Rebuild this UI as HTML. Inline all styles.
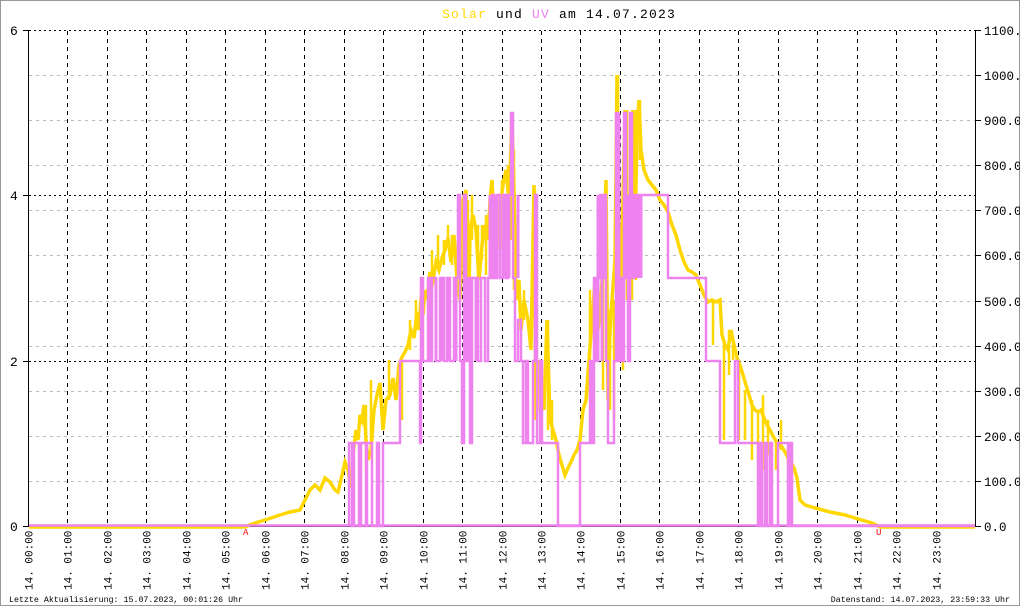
<!DOCTYPE html>
<html><head><meta charset="utf-8"><style>
html,body{margin:0;padding:0;background:#fff}
svg{display:block}
text{font-family:"Liberation Mono","DejaVu Sans Mono",monospace}
</style></head><body>
<svg width="1020" height="606" viewBox="0 0 1020 606" xmlns="http://www.w3.org/2000/svg">
<rect x="0.5" y="0.5" width="1019" height="605" fill="#fff" stroke="#999"/>
<text x="559" y="18" text-anchor="middle" font-size="13" letter-spacing="1.2" fill="#000"><tspan fill="#FFD700">Solar</tspan> und <tspan fill="#EE82EE">UV</tspan> am 14.07.2023</text>
<g stroke="#bbb" stroke-dasharray="3,4" stroke-width="1">
<line x1="29" y1="481.5" x2="975" y2="481.5"/><line x1="29" y1="436.5" x2="975" y2="436.5"/>
<line x1="29" y1="391.5" x2="975" y2="391.5"/><line x1="29" y1="346.5" x2="975" y2="346.5"/>
<line x1="29" y1="301.5" x2="975" y2="301.5"/><line x1="29" y1="255.5" x2="975" y2="255.5"/>
<line x1="29" y1="210.5" x2="975" y2="210.5"/><line x1="29" y1="165.5" x2="975" y2="165.5"/>
<line x1="29" y1="120.5" x2="975" y2="120.5"/><line x1="29" y1="75.5" x2="975" y2="75.5"/>
</g>
<g stroke="#000" stroke-dasharray="2,3" stroke-width="1">
<line x1="29" y1="30.5" x2="975" y2="30.5"/><line x1="29" y1="195.5" x2="975" y2="195.5"/><line x1="29" y1="361.5" x2="975" y2="361.5"/>
</g>
<g stroke="#000" stroke-dasharray="4,4" stroke-width="1" id="vg"></g>
<g id="lbl" font-size="11" fill="#000"></g>
<line x1="28.5" y1="30" x2="28.5" y2="527" stroke="#000"/>
<line x1="975.5" y1="30" x2="975.5" y2="527" stroke="#000"/>
<line x1="28" y1="526.5" x2="976" y2="526.5" stroke="#000"/>
<g stroke="#000"><line x1="23" y1="30.5" x2="28" y2="30.5"/><line x1="23" y1="195.5" x2="28" y2="195.5"/><line x1="23" y1="361.5" x2="28" y2="361.5"/><line x1="23" y1="526.5" x2="28" y2="526.5"/></g>
<g stroke="#000" id="rt"></g>
<g font-size="13" fill="#000"><text x="10" y="35">6</text><text x="10" y="200">4</text><text x="10" y="366">2</text><text x="10" y="531">0</text></g>
<g font-size="12.5" fill="#000" id="rl"></g>
<polyline fill="none" stroke="#FFD700" stroke-width="3.5" stroke-linejoin="miter" points="29,527 245,527 252,524 265,520 280,515 290,512 300,510 305,500 310,490 315,485 320,490 325,478 330,482 335,490 338,492 342,475 345,462 348,470 351,488 353,455 356,430 358,440 360,415 362,420 364,405 366,440 368,460 371,450 374,410 377,395 380,383 383,430 386,400 390,395 393,378 396,400 399,365 402,357 405,352 408,345 411,330 414,338 417,312 419,330 421,298 423,315 425,290 427,300 430,272 433,280 436,262 439,270 442,258 445,250 448,238 451,262 454,235 457,280 460,300 463,200 466,190 468,360 470,230 473,215 476,230 479,280 482,245 485,225 488,240 490,200 492,180 495,250 498,240 500,205 503,185 506,170 509,200 512,120 514,190 516,300 519,280 521,330 524,300 528,320 531,350 534,185 536,420 539,360 541,390 544,410 547,320 550,420 553,430 556,440 559,455 562,465 565,475 568,468 571,462 574,455 577,450 580,440 583,410 586,400 589,360 592,320 595,280 598,330 601,300 604,240 606,180 608,400 610,330 612,300 615,260 617,75 619,230 621,300 623,200 625,110 627,250 629,280 631,140 633,110 635,240 637,130 639,100 641,150 644,170 648,180 652,185 656,190 660,200 664,205 668,212 672,225 676,235 680,250 684,262 688,270 692,272 696,275 700,285 704,295 708,302 712,300 716,302 720,300 722,335 725,345 728,350 731,330 734,345 737,358 740,365 743,375 746,385 749,395 752,405 755,410 758,412 761,410 764,418 767,425 770,430 773,436 776,441 779,445 782,447 785,452 788,458 791,462 794,468 797,478 800,500 805,505 815,508 830,512 845,515 855,518 865,521 872,523 880,527 975,527"/>
<g stroke="#FFD700" stroke-width="2.5" fill="none">
<path d="M366,405V470 M371,445V380 M389,400V360 M402,360V420 M410,350V320 M416,330V300 M421,310V290 M432,290V250 M438,265V235 M444,265V240 M448,245V225 M452,265V235 M458,290V240 M464,200V270 M468,360V200 M472,240V195 M478,290V225 M482,260V225 M486,275V215 M492,260V180 M497,250V195 M502,250V180 M508,265V165 M511,240V120 M514,290V150 M524,320V290 M535,190V330 M540,410V360 M548,320V430 M552,400V440 M590,290V400 M595,350V280 M603,390V230 M606,180V280 M610,410V310 M614,420V300 M618,75V310 M623,370V180 M627,110V300 M632,300V140 M636,280V110 M640,100V160 M713,300V345 M724,340V440 M729,330V375 M733,345V360 M739,360V440 M745,390V440 M752,400V460 M758,410V460 M763,395V470 M768,420V455 M776,440V470 M781,420V450 M788,450V465"/>
</g>
<line x1="29" y1="525.5" x2="975" y2="525.5" stroke="#EE82EE" stroke-width="2.5"/>
<polyline fill="none" stroke="#EE82EE" stroke-width="2.5" points="349,526 349,443 352,443 352,526 354,526 354,443 359,443 359,526 361,526 361,443 366,443 366,526 367,526 367,443 372,443 372,526 377,526 377,443 379,443 379,526 383,526 383,443 400,443 400,361 420,361 420,443 421,443 421,278 423,278 423,361 428,361 428,278 430,278 430,361 432,361 432,278 436,278 436,361 440,361 440,278 444,278 444,361 447,361 447,278 450,278 450,361 454,361 454,278 458,278 458,195 460,195 460,361 462,361 462,443 464,443 464,195 466,195 466,361 468,361 468,278 470,278 470,443 472,443 472,278 478,278 478,361 481,361 481,278 485,278 485,361 488,361 488,278 492,278 492,195 494,195 494,278 497,278 497,195 500,195 500,278 503,278 503,195 506,195 506,278 508,278 508,195 511,195 511,113 513,113 513,278 515,278 515,361 518,361 518,320 521,320 521,361 523,361 523,443 526,443 526,361 528,361 528,443 533,443 533,361 535,361 535,195 537,195 537,443 540,443 540,361 542,361 542,443 558,443 558,526 580,526 580,443 590,443 590,361 592,361 592,443 594,443 594,278 596,278 596,361 598,361 598,278 600,278 600,195 602,195 602,278 604,278 604,195 606,195 606,361 608,361 608,443 614,443 614,361 616,361 616,113 618,113 618,361 620,361 620,278 622,278 622,361 624,361 624,113 626,113 626,278 628,278 628,361 630,361 630,113 632,113 632,278 634,278 634,195 668,195 668,278 706,278 706,361 720,361 720,443 735,443 735,361 738,361 738,443 758,443 758,526 760,526 760,443 762,443 762,526 765,526 765,443 767,443 767,526 770,526 770,443 772,443 772,526 778,526 778,443 788,443 788,526 790,526 790,443 792,443 792,526 975,526"/>
<g stroke="#EE82EE" stroke-width="3" fill="none">
<path d="M436,278V361 M442,278V361 M448,278V361 M456,278V361 M476,278V361 M490,195V278 M496,195V278 M500,195V278 M504,195V278 M509,195V278 M518,195V278 M598,195V361 M602,195V361 M619,113V361 M626,195V278 M629,195V278 M631,195V278 M633,195V278 M635,195V278 M637,195V278 M639,195V278 M641,195V278"/>
</g>
<text x="243" y="535" font-size="9" fill="#e00">A</text>
<text x="876" y="535" font-size="9" fill="#e00">U</text>
<text x="9" y="602" font-size="8.3" fill="#000">Letzte Aktualisierung: 15.07.2023, 00:01:26 Uhr</text>
<text x="1010" y="602" font-size="8.3" fill="#000" text-anchor="end">Datenstand: 14.07.2023, 23:59:33 Uhr</text>
<script>
var ns="http://www.w3.org/2000/svg";
var vg=document.getElementById('vg'),lbl=document.getElementById('lbl');
for(var k=0;k<24;k++){var x=Math.round(28+k*39.46)+0.5;
 if(k>0){var l=document.createElementNS(ns,'line');l.setAttribute('x1',x);l.setAttribute('x2',x);l.setAttribute('y1',31);l.setAttribute('y2',526);vg.appendChild(l);}
 var t=document.createElementNS(ns,'text');var hh=(k<10?'0':'')+k;t.textContent='14. '+hh+':00';
 t.setAttribute('transform','translate('+(x+4)+',590) rotate(-90)');lbl.appendChild(t);}
var rt=document.getElementById('rt'),rl=document.getElementById('rl');
for(var i=0;i<=11;i++){var y=Math.round(526-i*45.09)+0.5;
 var l=document.createElementNS(ns,'line');l.setAttribute('x1',976);l.setAttribute('x2',981);l.setAttribute('y1',y);l.setAttribute('y2',y);rt.appendChild(l);
 var t=document.createElementNS(ns,'text');t.setAttribute('x',984);t.setAttribute('y',y+4.5);t.textContent=(i*100)+'.0';rl.appendChild(t);}
</script>
</svg>
</body></html>
